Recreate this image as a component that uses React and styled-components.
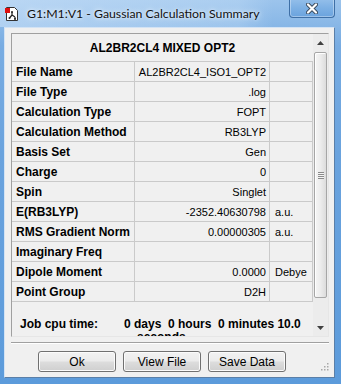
import { Fragment } from "react";
import styled, { createGlobalStyle } from "styled-components";

const GlobalStyle = createGlobalStyle`
  html, body {
    margin: 0;
    padding: 0;
    background: #ffffff;
  }
  * {
    box-sizing: border-box;
  }
`;

const Window = styled.div`
  position: relative;
  width: 341px;
  height: 384px;
  padding: 27px 6px 6px 4px;
  background: linear-gradient(180deg, #9cc4ec 0%, #78ace2 12%, #6aa3de 40%, #5c9bdb 100%);
  overflow: hidden;
`;

const TitleBar = styled.div`
  position: absolute;
  top: 0;
  left: 0;
  right: 0;
  height: 27px;
  display: flex;
  align-items: center;
  padding-left: 4px;
  background: linear-gradient(90deg, rgba(210, 230, 250, 0.55) 0%, rgba(200, 225, 248, 0.35) 70%, rgba(255, 255, 255, 0) 80%);
`;

const TitleIcon = styled.svg`
  width: 16px;
  height: 16px;
  flex: none;
`;

const TitleText = styled.span`
  margin-left: 7px;
  font-family: Lato, "Open Sans", sans-serif;
  font-size: 12.3px;
  color: #111;
  white-space: nowrap;
  text-shadow: 0 0 6px #e8f2fc, 0 0 3px #e8f2fc;
`;

const CloseButton = styled.div`
  position: absolute;
  top: -1px;
  left: 289px;
  width: 46px;
  height: 19px;
  display: flex;
  align-items: center;
  justify-content: center;
  border: 1px solid #3e6fa6;
  border-top: none;
  border-radius: 0 0 4px 4px;
  background: linear-gradient(180deg, #94bfea 0%, #7db0e4 50%, #6aa3de 100%);
  box-shadow: inset 0 0 0 1px rgba(255, 255, 255, 0.35);
`;

const Client = styled.div`
  position: relative;
  height: 100%;
  display: flex;
  flex-direction: column;
  background: #f0f0f0;
  border: 1px solid;
  border-color: #d3e3f4 #5a7fa8 #5a7fa8 #d3e3f4;
`;

const Panel = styled.div`
  display: flex;
  margin: 5px 5px 0 6px;
  height: 304px;
  border: 1px solid;
  border-color: #a0a0a0 #e6e6e6 #e6e6e6 #a0a0a0;
  background: #f0f0f0;
`;

const Content = styled.div`
  width: 301px;
  height: 302px;
  overflow: hidden;
`;

const Grid = styled.div`
  display: grid;
  grid-template-columns: 123px 135px 43px;
`;

const Header = styled.div`
  grid-column: 1 / 4;
  height: 28px;
  display: flex;
  align-items: center;
  justify-content: center;
  border-bottom: 1px solid #cacaca;
  font-family: "Liberation Sans", Arial, sans-serif;
  font-weight: bold;
  font-size: 12px;
  color: #000;
`;

const Cell = styled.div`
  height: 20px;
  display: flex;
  align-items: center;
  border-right: 1px solid #cacaca;
  border-bottom: 1px solid #cacaca;
  font-family: "Liberation Sans", Arial, sans-serif;
  color: #000;
  white-space: nowrap;
  overflow: hidden;
  font-size: ${(p) => (p.$bold ? "12px" : "11px")};
  font-weight: ${(p) => (p.$bold ? "bold" : "normal")};
  justify-content: ${(p) => (p.$right ? "flex-end" : "flex-start")};
  padding: ${(p) => (p.$right ? "0 3px 0 0" : p.$bold ? "0 0 0 4px" : "0 0 0 5px")};
`;

const CpuBlock = styled.div`
  display: flex;
  margin-top: 16px;
  padding-left: 8px;
  font-family: "Liberation Sans", Arial, sans-serif;
  font-weight: bold;
  font-size: 12px;
  line-height: 12px;
  color: #000;
`;

const CpuLabel = styled.span`
  width: 104px;
  flex: none;
`;

const CpuValue = styled.span`
  white-space: pre;
`;

const CpuWrap = styled.span`
  display: block;
  margin-top: 1px;
  padding-left: 13px;
`;

const Scrollbar = styled.div`
  width: 15px;
  height: 302px;
  display: flex;
  flex-direction: column;
  background: #ececec;
`;

const ArrowButton = styled.div`
  height: 17px;
  flex: none;
  display: flex;
  align-items: center;
  justify-content: center;
`;

const Track = styled.div`
  flex: 1;
  padding: 1px 1px 0 1px;
`;

const Thumb = styled.div`
  height: 246px;
  display: flex;
  align-items: center;
  justify-content: center;
  border: 1px solid #a6a6a6;
  border-radius: 2px;
  background: linear-gradient(90deg, #f6f6f6 0%, #ececec 50%, #dcdcdc 100%);
  box-shadow: inset 1px 1px 0 #ffffff;
`;

const Grip = styled.div`
  width: 6px;
  height: 7px;
  background: repeating-linear-gradient(180deg, #8a8a8a 0 1px, #f4f4f4 1px 2px);
`;

const Separator = styled.div`
  margin: 5px 5px 0 6px;
  height: 2px;
  border-top: 1px solid #a0a0a0;
  border-bottom: 1px solid #ffffff;
`;

const ButtonRow = styled.div`
  display: flex;
  gap: 7px;
  margin-top: 7px;
  padding-left: 33px;
`;

const Button = styled.div`
  width: 78px;
  height: 21px;
  display: flex;
  align-items: center;
  justify-content: center;
  border: 1px solid #707070;
  border-radius: 3px;
  background: linear-gradient(180deg, #f2f2f2 0%, #ebebeb 48%, #dddddd 52%, #cfcfcf 100%);
  box-shadow: inset 0 0 0 1px #fbfbfb;
  font-family: "Liberation Sans", Arial, sans-serif;
  font-size: 12px;
  color: #000;
`;

const ResizeGrip = styled.svg`
  position: absolute;
  right: 5px;
  bottom: 6px;
  width: 9px;
  height: 9px;
`;

const rows = [
  ["File Name", "AL2BR2CL4_ISO1_OPT2", ""],
  ["File Type", ".log", ""],
  ["Calculation Type", "FOPT", ""],
  ["Calculation Method", "RB3LYP", ""],
  ["Basis Set", "Gen", ""],
  ["Charge", "0", ""],
  ["Spin", "Singlet", ""],
  ["E(RB3LYP)", "-2352.40630798", "a.u."],
  ["RMS Gradient Norm", "0.00000305", "a.u."],
  ["Imaginary Freq", "", ""],
  ["Dipole Moment", "0.0000", "Debye"],
  ["Point Group", "D2H", ""],
];

const AppIcon = () => (
  <TitleIcon viewBox="0 0 16 16">
    <path d="M2.5 1.5h8l3 3v10h-11z" fill="#ffffff" stroke="#333" strokeWidth="1" />
    <rect x="1" y="2" width="5" height="5" fill="#e01010" />
    <path d="M8 6v3M8 9l-2.5 3M8 9l3 2M11 11v2" stroke="#222" strokeWidth="1.2" fill="none" />
    <circle cx="8" cy="6" r="1" fill="#222" />
    <circle cx="5.5" cy="12" r="1" fill="#222" />
    <circle cx="11" cy="13" r="1" fill="#222" />
  </TitleIcon>
);

const CloseGlyph = () => (
  <svg width="12" height="11" viewBox="0 0 12 11">
    <path d="M2 1.5l8 8M10 1.5l-8 8" stroke="#3a4a5c" strokeWidth="4" strokeLinecap="round" />
    <path d="M2 1.5l8 8M10 1.5l-8 8" stroke="#ffffff" strokeWidth="2.2" strokeLinecap="round" />
  </svg>
);

const App = () => (
  <>
    <GlobalStyle />
    <Window>
      <TitleBar>
        <AppIcon />
        <TitleText>G1:M1:V1 - Gaussian Calculation Summary</TitleText>
        <CloseButton>
          <CloseGlyph />
        </CloseButton>
      </TitleBar>

      <Client>
        <Panel>
          <Content>
            <Grid>
              <Header>AL2BR2CL4 MIXED OPT2</Header>
              {rows.map(([label, value, unit]) => (
                <Fragment key={label}>
                  <Cell $bold>{label}</Cell>
                  <Cell $right>{value}</Cell>
                  <Cell>{unit}</Cell>
                </Fragment>
              ))}
            </Grid>

            <CpuBlock>
              <CpuLabel>Job cpu time:</CpuLabel>
              <CpuValue>
                {"0 days  0 hours  0 minutes 10.0"}
                <CpuWrap>seconds</CpuWrap>
              </CpuValue>
            </CpuBlock>
          </Content>

          <Scrollbar>
            <ArrowButton>
              <svg width="7" height="4" viewBox="0 0 7 4">
                <path d="M0 4L3.5 0L7 4z" fill="#404040" />
              </svg>
            </ArrowButton>
            <Track>
              <Thumb>
                <Grip />
              </Thumb>
            </Track>
            <ArrowButton>
              <svg width="7" height="4" viewBox="0 0 7 4">
                <path d="M0 0L3.5 4L7 0z" fill="#404040" />
              </svg>
            </ArrowButton>
          </Scrollbar>
        </Panel>

        <Separator />

        <ButtonRow>
          <Button>Ok</Button>
          <Button>View File</Button>
          <Button>Save Data</Button>
        </ButtonRow>

        <ResizeGrip viewBox="0 0 9 9">
          {[[7, 1], [7, 4], [4, 4], [7, 7], [4, 7], [1, 7]].map(([x, y]) => (
            <rect key={`${x}-${y}`} x={x} y={y} width="1.5" height="1.5" fill="#a8a8a8" />
          ))}
        </ResizeGrip>
      </Client>
    </Window>
  </>
);

export default App;
